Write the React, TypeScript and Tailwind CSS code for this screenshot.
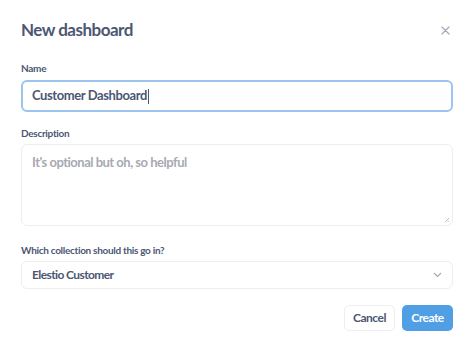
import React from 'react';

const font = { fontFamily: 'Lato, "Open Sans", sans-serif' };

export default function App() {
  return (
    <div className="w-[474px] h-[350px] bg-white text-[#4c5773]" style={font}>
      <div className="px-[21px] pt-[18px]">
        <div className="flex items-center justify-between h-[24px]">
          <h1 className="text-[17px] font-bold tracking-[-0.5px]">New dashboard</h1>
          <svg width="9" height="9" viewBox="0 0 9 9" className="mr-[3px] text-[#a3a8b5]">
            <path d="M1 1L8 8M8 1L1 8" stroke="currentColor" strokeWidth="1.2" strokeLinecap="round" />
          </svg>
        </div>

        <label className="block mt-[19px] text-[10px] font-bold tracking-[-0.3px] text-[#4c5773] leading-[14px]">Name</label>
        <div className="mt-[5px] h-[32px] rounded-[6px] border-2 border-[#9cc5ee] flex items-center pl-[9px] text-[13px] font-bold tracking-[-0.4px] text-[#4c5773]">
          Customer Dashboard<span className="w-px h-[15px] bg-[#4c5773] ml-px" />
        </div>

        <label className="block mt-[14px] text-[10px] font-bold tracking-[-0.3px] text-[#4c5773] leading-[14px]">Description</label>
        <div className="relative mt-[4px] h-[82px] rounded-[6px] border border-[#eeeef0] pl-[10px] pt-[8px] text-[13px] font-bold tracking-[-0.5px] text-[#a7aab3]">
          It's optional but oh, so helpful
          <svg width="6" height="6" viewBox="0 0 6 6" className="absolute right-[2px] bottom-[2px] text-[#b0b3bb]">
            <path d="M1 5L5 1M3.5 5L5 3.5" stroke="currentColor" strokeWidth="0.8" />
          </svg>
        </div>

        <label className="block mt-[17px] text-[10px] font-bold tracking-[-0.3px] text-[#4c5773] leading-[14px]">Which collection should this go in?</label>
        <div className="mt-[4px] h-[28px] rounded-[6px] border border-[#eeeef0] flex items-center justify-between pl-[10px] pr-[10px] text-[12px] font-bold tracking-[-0.6px] text-[#4c5773]">
          <span>Elestio Customer</span>
          <svg width="9" height="6" viewBox="0 0 9 6" className="text-[#a7aab3]">
            <path d="M1 1L4.5 4.5L8 1" stroke="currentColor" strokeWidth="1.2" fill="none" />
          </svg>
        </div>

        <div className="mt-[16px] flex justify-end gap-[7px]">
          <button className="h-[26px] w-[51px] rounded-[5px] border border-[#eeeef0] text-[12px] font-bold tracking-[-0.5px] text-[#4c5773]">Cancel</button>
          <button className="h-[26px] w-[51px] rounded-[5px] bg-[#509ee3] text-[12px] font-bold tracking-[-0.5px] text-white">Create</button>
        </div>
      </div>
    </div>
  );
}
